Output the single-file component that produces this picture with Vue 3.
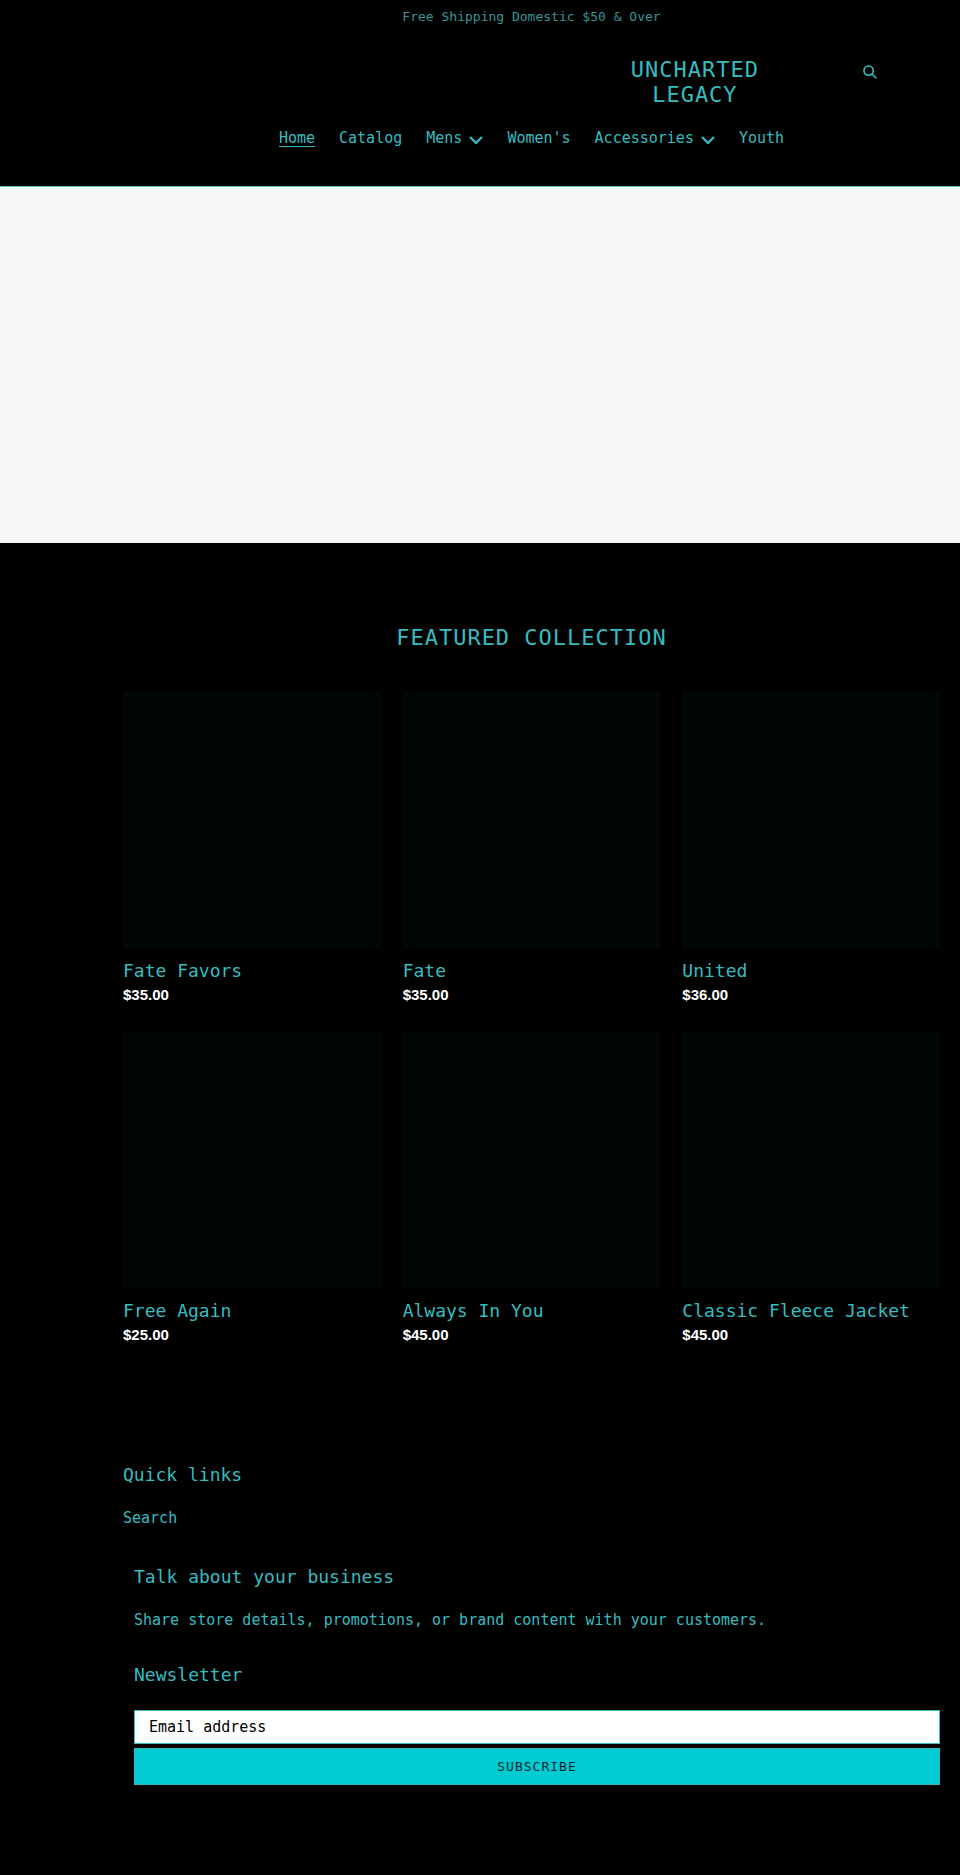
<template>
  <div class="page">
    <p class="announcement">Free Shipping Domestic $50 &amp; Over</p>

    <header class="site-header">
      <div class="site-header__top">
        <a href="#" class="site-header__logo">Uncharted Legacy</a>
        <button type="button" class="site-header__search" aria-label="Search">
          <svg viewBox="0 0 20 20" class="icon-search" aria-hidden="true">
            <circle cx="8" cy="8" r="6.6" />
            <path d="M12.8 12.8 L19 19" />
          </svg>
        </button>
      </div>

      <nav class="site-nav">
        <template v-for="item in navItems" :key="item.label">
          <button v-if="item.dropdown" type="button" class="site-nav__link">
            <span>{{ item.label }}</span>
            <svg viewBox="0 0 14 8" class="icon-chevron" aria-hidden="true">
              <path d="M1 1 L7 7 L13 1" />
            </svg>
          </button>
          <a
            v-else
            href="#"
            class="site-nav__link"
            :class="{ 'site-nav__link--active': item.active }"
          >{{ item.label }}</a>
        </template>
      </nav>
    </header>

    <main>
      <div class="slideshow"></div>

      <section class="collection">
        <h2 class="collection__title">Featured collection</h2>
        <div class="collection__grid">
          <a v-for="product in products" :key="product.name" href="#" class="product-card">
            <div class="product-card__image"></div>
            <h3 class="product-card__name">{{ product.name }}</h3>
            <span class="product-card__price">{{ product.price }}</span>
          </a>
        </div>
      </section>
    </main>

    <footer class="site-footer">
      <div class="site-footer__links">
        <h4 class="site-footer__title">Quick links</h4>
        <a href="#" class="site-footer__text">Search</a>
      </div>

      <div class="site-footer__block">
        <h4 class="site-footer__title">Talk about your business</h4>
        <p class="site-footer__text">
          Share store details, promotions, or brand content with your customers.
        </p>
      </div>

      <form class="newsletter" @submit.prevent>
        <label for="newsletter-email" class="site-footer__title">Newsletter</label>
        <input
          id="newsletter-email"
          v-model="email"
          type="email"
          class="newsletter__input"
          placeholder="Email address"
        />
        <button type="submit" class="newsletter__submit">Subscribe</button>
      </form>
    </footer>
  </div>
</template>

<script setup>
import { ref } from 'vue'

const email = ref('')

const navItems = [
  { label: 'Home', active: true },
  { label: 'Catalog' },
  { label: 'Mens', dropdown: true },
  { label: "Women's" },
  { label: 'Accessories', dropdown: true },
  { label: 'Youth' },
]

const products = [
  { name: 'Fate Favors', price: '$35.00' },
  { name: 'Fate', price: '$35.00' },
  { name: 'United', price: '$36.00' },
  { name: 'Free Again', price: '$25.00' },
  { name: 'Always In You', price: '$45.00' },
  { name: 'Classic Fleece Jacket', price: '$45.00' },
]
</script>

<style>
body {
  margin: 0;
  background: #000000;
}
</style>

<style scoped>
.page {
  --color-text: #36bcc0;
  --color-button: #00cbd3;
  --font-mono: 'DejaVu Sans Mono', monospace;
  min-height: 100vh;
  background: #000000;
  color: var(--color-text);
  font-family: var(--font-mono);
  font-size: 15px;
}
h2,
h3,
h4,
p {
  margin: 0;
  font-weight: 400;
}
a {
  color: inherit;
  text-decoration: none;
}
button,
input {
  box-sizing: border-box;
  margin: 0;
  font-family: inherit;
  border-radius: 0;
}

/* Every block shares the same side gutters */
.announcement,
.site-header,
.collection,
.site-footer {
  padding-left: 123px;
  padding-right: 20px;
}

.announcement {
  padding-top: 6px;
  padding-bottom: 6px;
  font-size: 13px;
  line-height: 22px;
  text-align: center;
  color: #3a9597;
}

.site-header {
  padding-top: 23px;
  padding-bottom: 39px;
  border-bottom: 1px solid #5cc0c4;
}
.site-header__top {
  display: grid;
  grid-template-columns: 5fr 4fr 1fr;
}
.site-header__logo {
  grid-column: 2;
  justify-self: center;
  max-width: 140px;
  font-size: 22px;
  line-height: 25px;
  letter-spacing: 1px;
  text-align: center;
  text-transform: uppercase;
}
.site-header__search {
  display: flex;
  align-self: start;
  justify-self: start;
  padding: 8px 5px;
  border: 0;
  background: none;
  color: inherit;
  cursor: pointer;
}
.icon-search {
  width: 14px;
  height: 14px;
  fill: none;
  stroke: currentColor;
  stroke-width: 2.3;
}

.site-nav {
  display: flex;
  justify-content: center;
  gap: 24px;
  margin-top: 23px;
}
.site-nav__link {
  display: flex;
  align-items: center;
  gap: 7px;
  padding: 0;
  border: 0;
  border-bottom: 1px solid transparent;
  background: none;
  color: inherit;
  font-size: 15px;
  line-height: 16px;
  cursor: pointer;
}
.site-nav__link--active {
  border-bottom-color: currentColor;
}
.icon-chevron {
  width: 14px;
  height: 8px;
  margin-top: 4px;
  fill: none;
  stroke: currentColor;
  stroke-width: 2.3;
}

.slideshow {
  height: 356px;
  background: #f7f7f7;
}

.collection {
  padding-top: 82px;
}
.collection__title {
  margin-bottom: 40px;
  font-size: 22px;
  line-height: 26px;
  letter-spacing: 1px;
  text-align: center;
  text-transform: uppercase;
}
.collection__grid {
  display: grid;
  grid-template-columns: repeat(3, 1fr);
  gap: 28px 22px;
}
.product-card {
  display: flex;
  flex-direction: column;
}
.product-card__image {
  aspect-ratio: 1;
  background: #000706;
}
.product-card__name {
  margin-top: 11px;
  font-size: 18px;
  line-height: 22px;
}
.product-card__price {
  margin-top: 4px;
  color: #ffffff;
  font-family: 'Liberation Sans', Arial, sans-serif;
  font-size: 15px;
  font-weight: 700;
  line-height: 18px;
}

.site-footer {
  padding-top: 120px;
  padding-bottom: 88px;
}
.site-footer__title {
  display: block;
  margin-bottom: 20px;
  font-size: 18px;
  line-height: 22px;
}
.site-footer__text {
  display: block;
  line-height: 24px;
}
.site-footer__block {
  margin-top: 36px;
  padding-left: 11px;
}
.newsletter {
  display: flex;
  flex-direction: column;
  gap: 4px;
  margin-top: 32px;
  padding-left: 11px;
}
.newsletter__input {
  width: 100%;
  height: 34px;
  padding: 0 14px;
  border: 1px solid var(--color-text);
  background: #ffffff;
  color: #000000;
  font-size: 15px;
}
.newsletter__input::placeholder {
  color: #000000;
  opacity: 1;
}
.newsletter__submit {
  width: 100%;
  height: 37px;
  padding: 0;
  border: 1px solid #36b4b8;
  background: var(--color-button);
  color: #00272b;
  font-size: 13px;
  letter-spacing: 1px;
  text-transform: uppercase;
  cursor: pointer;
}
</style>
